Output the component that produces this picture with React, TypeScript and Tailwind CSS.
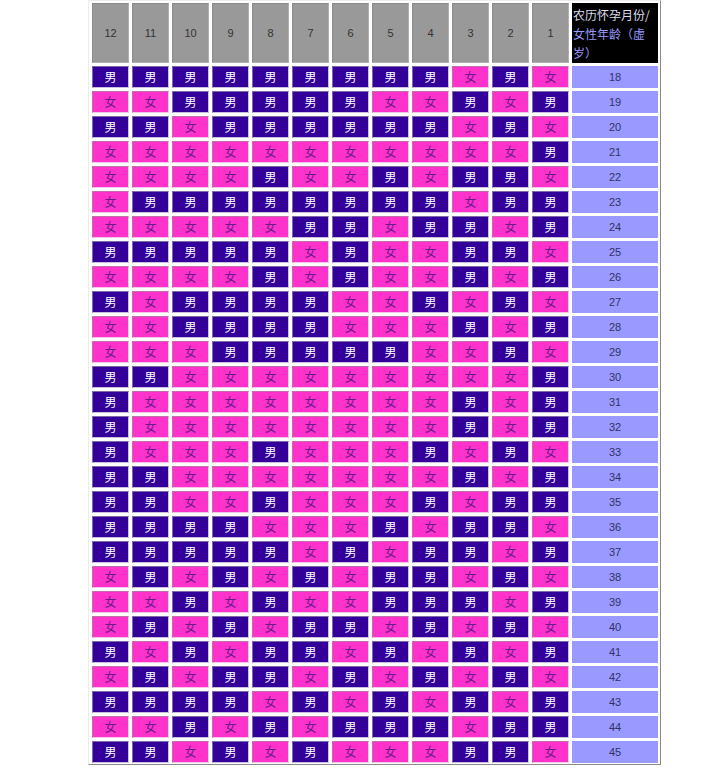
import React from "react";

const rows: [number, string][] = [
  [18, "MMMMMMMMMFMF"],
  [19, "FFMMMMMFFMFM"],
  [20, "MMFMMMMMMFMF"],
  [21, "FFFFFFFFFFFM"],
  [22, "FFFFMFFMFMMF"],
  [23, "FMMMMMMMMFMM"],
  [24, "FFFFFMMFMMFM"],
  [25, "MMMMMFMFFMMF"],
  [26, "FFFFMFMFFMFM"],
  [27, "MFMMMMFFMFMF"],
  [28, "FFMMMMFFFMFM"],
  [29, "FFFMMMMMFFMF"],
  [30, "MMFFFFFFFFFM"],
  [31, "MFFFFFFFFMFM"],
  [32, "MFFFFFFFFMFM"],
  [33, "MFFFMFFFMFMF"],
  [34, "MMFFFFFFFMFM"],
  [35, "MMFFMFFFMFMM"],
  [36, "MMMMFFFMFMMF"],
  [37, "MMMMMFMFMMFM"],
  [38, "FMFMFMFMMFMF"],
  [39, "FFMFMFFMMMFM"],
  [40, "FMFMFMMFMFMF"],
  [41, "MFMFMMFMFMFM"],
  [42, "FMFMMFMFMFMF"],
  [43, "MMMMFMFMFMFM"],
  [44, "FFMFMFMMMFMM"],
  [45, "MMFMFMFFFMMF"],
];

const months = [12, 11, 10, 9, 8, 7, 6, 5, 4, 3, 2, 1];

const cjk = "font-['Noto_Sans_CJK_SC',sans-serif]";
const num = "font-['Liberation_Sans',Arial,sans-serif]";

export default function App() {
  return (
    <div className="min-h-[771px] bg-white">
      <div className="ml-[88px] inline-block border border-t-[#ececec] border-l-[#ececec] border-r-[#8a8a8a] border-b-[#8a8a8a] pt-[2px] pl-[3px] pr-[2px] pb-[1px]">
        <div className="grid grid-cols-[repeat(12,37px)_86px] gap-[3px]">
          {months.map((m) => (
            <div
              key={m}
              className={`h-[60px] bg-[#999999] border border-t-[#8c8c8c] border-l-[#8c8c8c] border-r-[#b0b0b0] border-b-[#b0b0b0] flex items-center justify-center text-[11px] text-[#333333] ${num}`}
            >
              {m}
            </div>
          ))}
          <div
            className={`h-[60px] bg-black flex flex-col justify-center pl-[1px] text-[12px] leading-[19px] ${cjk}`}
          >
            <div className="text-[#dcdcec] whitespace-nowrap">农历怀孕月份/</div>
            <div className="text-[#9999ff] whitespace-nowrap">女性年龄（虚</div>
            <div className="text-[#9999ff] whitespace-nowrap">岁）</div>
          </div>
          {rows.map(([age, cells]) => (
            <React.Fragment key={age}>
              {cells.split("").map((c, i) =>
                c === "M" ? (
                  <div
                    key={i}
                    className={`h-[22px] bg-[#330099] border border-t-[#7a6aa8] border-l-[#7a6aa8] border-r-[#c8c0dc] border-b-[#c8c0dc] flex items-center justify-center text-[12px] text-white ${cjk}`}
                  >
                    男
                  </div>
                ) : (
                  <div
                    key={i}
                    className={`h-[22px] bg-[#ff33cc] border border-t-[#c070a8] border-l-[#c070a8] border-r-[#f2c8e6] border-b-[#f2c8e6] flex items-center justify-center text-[12px] text-[#6a1a88] ${cjk}`}
                  >
                    女
                  </div>
                )
              )}
              <div
                className={`h-[22px] bg-[#9999ff] flex items-center justify-center text-[11px] text-[#333366] ${num}`}
              >
                {age}
              </div>
            </React.Fragment>
          ))}
        </div>
      </div>
    </div>
  );
}
